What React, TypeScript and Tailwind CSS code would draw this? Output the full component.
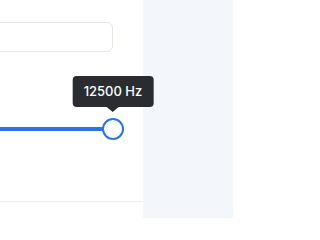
export default function App() {
  return (
    <div
      className="flex w-[233px] h-[218px] overflow-hidden"
      style={{ fontFamily: "Inter, 'Noto Sans', sans-serif" }}
    >
      {/* Settings column */}
      <div className="w-[143px] shrink-0 bg-white flex flex-col">
        <div className="-ml-4 mr-[30px] mt-[22px] h-[30px] rounded-md border border-[#e3e6eb] bg-white" />

        {/* Frequency slider */}
        <div className="-ml-4 mr-[19px] mt-[66px] flex items-center h-[22px]">
          <div className="flex-1 h-[4px] bg-[#2c72ea] -mr-[2px]" />
          <div className="relative z-10 w-[22px] h-[22px] shrink-0 rounded-full border-[2.5px] border-[#2c72ea] bg-white">
            <div className="absolute bottom-full left-1/2 -translate-x-1/2 mb-[8px] flex flex-col items-center">
              <div className="h-[31px] flex items-center rounded-[4px] bg-[#2a2c30] px-[11px] text-[13px] font-medium text-white whitespace-nowrap">
                12500 Hz
              </div>
              <div className="w-0 h-0 border-x-[6px] border-x-transparent border-t-[5px] border-t-[#2a2c30]" />
            </div>
          </div>
        </div>

        <div className="mt-[61px] border-t border-[#eceef1]" />
      </div>

      {/* Side panel */}
      <div className="flex-1 bg-[#f3f6fa]" />
    </div>
  );
}
